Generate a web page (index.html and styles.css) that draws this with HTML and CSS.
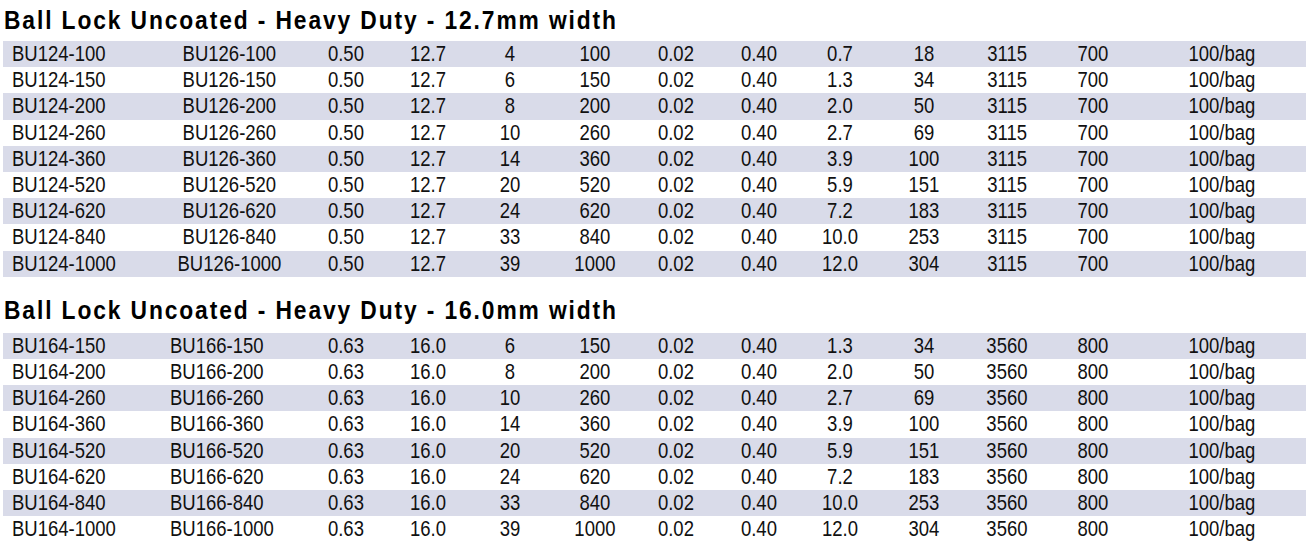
FILE: index.html
```html
<!DOCTYPE html>
<html>
<head>
    <link rel="stylesheet" href="styles.css">
</head>
<body>
    <section class="spec-block">
        <h2 class="spec-title"><span>Ball Lock Uncoated - Heavy Duty - 12.7mm width</span></h2>
        <table class="spec-table spec-table-a">
            <colgroup>
                <col class="c-code"><col class="c-alt"><col class="c-3"><col class="c-4"><col class="c-5"><col class="c-6"><col class="c-7">
                <col class="c-8"><col class="c-9"><col class="c-10"><col class="c-11"><col class="c-12"><col class="c-13">
            </colgroup>
            <tbody>
                <tr><td><span>BU124-100</span></td><td><span>BU126-100</span></td><td><span>0.50</span></td><td><span>12.7</span></td><td><span>4</span></td><td><span>100</span></td><td><span>0.02</span></td><td><span>0.40</span></td><td><span>0.7</span></td><td><span>18</span></td><td><span>3115</span></td><td><span>700</span></td><td><span>100/bag</span></td></tr>
                <tr><td><span>BU124-150</span></td><td><span>BU126-150</span></td><td><span>0.50</span></td><td><span>12.7</span></td><td><span>6</span></td><td><span>150</span></td><td><span>0.02</span></td><td><span>0.40</span></td><td><span>1.3</span></td><td><span>34</span></td><td><span>3115</span></td><td><span>700</span></td><td><span>100/bag</span></td></tr>
                <tr><td><span>BU124-200</span></td><td><span>BU126-200</span></td><td><span>0.50</span></td><td><span>12.7</span></td><td><span>8</span></td><td><span>200</span></td><td><span>0.02</span></td><td><span>0.40</span></td><td><span>2.0</span></td><td><span>50</span></td><td><span>3115</span></td><td><span>700</span></td><td><span>100/bag</span></td></tr>
                <tr><td><span>BU124-260</span></td><td><span>BU126-260</span></td><td><span>0.50</span></td><td><span>12.7</span></td><td><span>10</span></td><td><span>260</span></td><td><span>0.02</span></td><td><span>0.40</span></td><td><span>2.7</span></td><td><span>69</span></td><td><span>3115</span></td><td><span>700</span></td><td><span>100/bag</span></td></tr>
                <tr><td><span>BU124-360</span></td><td><span>BU126-360</span></td><td><span>0.50</span></td><td><span>12.7</span></td><td><span>14</span></td><td><span>360</span></td><td><span>0.02</span></td><td><span>0.40</span></td><td><span>3.9</span></td><td><span>100</span></td><td><span>3115</span></td><td><span>700</span></td><td><span>100/bag</span></td></tr>
                <tr><td><span>BU124-520</span></td><td><span>BU126-520</span></td><td><span>0.50</span></td><td><span>12.7</span></td><td><span>20</span></td><td><span>520</span></td><td><span>0.02</span></td><td><span>0.40</span></td><td><span>5.9</span></td><td><span>151</span></td><td><span>3115</span></td><td><span>700</span></td><td><span>100/bag</span></td></tr>
                <tr><td><span>BU124-620</span></td><td><span>BU126-620</span></td><td><span>0.50</span></td><td><span>12.7</span></td><td><span>24</span></td><td><span>620</span></td><td><span>0.02</span></td><td><span>0.40</span></td><td><span>7.2</span></td><td><span>183</span></td><td><span>3115</span></td><td><span>700</span></td><td><span>100/bag</span></td></tr>
                <tr><td><span>BU124-840</span></td><td><span>BU126-840</span></td><td><span>0.50</span></td><td><span>12.7</span></td><td><span>33</span></td><td><span>840</span></td><td><span>0.02</span></td><td><span>0.40</span></td><td><span>10.0</span></td><td><span>253</span></td><td><span>3115</span></td><td><span>700</span></td><td><span>100/bag</span></td></tr>
                <tr><td><span>BU124-1000</span></td><td><span>BU126-1000</span></td><td><span>0.50</span></td><td><span>12.7</span></td><td><span>39</span></td><td><span>1000</span></td><td><span>0.02</span></td><td><span>0.40</span></td><td><span>12.0</span></td><td><span>304</span></td><td><span>3115</span></td><td><span>700</span></td><td><span>100/bag</span></td></tr>
            </tbody>
        </table>
    </section>

    <section class="spec-block">
        <h2 class="spec-title"><span>Ball Lock Uncoated - Heavy Duty - 16.0mm width</span></h2>
        <table class="spec-table spec-table-b">
            <colgroup>
                <col class="c-code"><col class="c-alt"><col class="c-3"><col class="c-4"><col class="c-5"><col class="c-6"><col class="c-7">
                <col class="c-8"><col class="c-9"><col class="c-10"><col class="c-11"><col class="c-12"><col class="c-13">
            </colgroup>
            <tbody>
                <tr><td><span>BU164-150</span></td><td><span>BU166-150</span></td><td><span>0.63</span></td><td><span>16.0</span></td><td><span>6</span></td><td><span>150</span></td><td><span>0.02</span></td><td><span>0.40</span></td><td><span>1.3</span></td><td><span>34</span></td><td><span>3560</span></td><td><span>800</span></td><td><span>100/bag</span></td></tr>
                <tr><td><span>BU164-200</span></td><td><span>BU166-200</span></td><td><span>0.63</span></td><td><span>16.0</span></td><td><span>8</span></td><td><span>200</span></td><td><span>0.02</span></td><td><span>0.40</span></td><td><span>2.0</span></td><td><span>50</span></td><td><span>3560</span></td><td><span>800</span></td><td><span>100/bag</span></td></tr>
                <tr><td><span>BU164-260</span></td><td><span>BU166-260</span></td><td><span>0.63</span></td><td><span>16.0</span></td><td><span>10</span></td><td><span>260</span></td><td><span>0.02</span></td><td><span>0.40</span></td><td><span>2.7</span></td><td><span>69</span></td><td><span>3560</span></td><td><span>800</span></td><td><span>100/bag</span></td></tr>
                <tr><td><span>BU164-360</span></td><td><span>BU166-360</span></td><td><span>0.63</span></td><td><span>16.0</span></td><td><span>14</span></td><td><span>360</span></td><td><span>0.02</span></td><td><span>0.40</span></td><td><span>3.9</span></td><td><span>100</span></td><td><span>3560</span></td><td><span>800</span></td><td><span>100/bag</span></td></tr>
                <tr><td><span>BU164-520</span></td><td><span>BU166-520</span></td><td><span>0.63</span></td><td><span>16.0</span></td><td><span>20</span></td><td><span>520</span></td><td><span>0.02</span></td><td><span>0.40</span></td><td><span>5.9</span></td><td><span>151</span></td><td><span>3560</span></td><td><span>800</span></td><td><span>100/bag</span></td></tr>
                <tr><td><span>BU164-620</span></td><td><span>BU166-620</span></td><td><span>0.63</span></td><td><span>16.0</span></td><td><span>24</span></td><td><span>620</span></td><td><span>0.02</span></td><td><span>0.40</span></td><td><span>7.2</span></td><td><span>183</span></td><td><span>3560</span></td><td><span>800</span></td><td><span>100/bag</span></td></tr>
                <tr><td><span>BU164-840</span></td><td><span>BU166-840</span></td><td><span>0.63</span></td><td><span>16.0</span></td><td><span>33</span></td><td><span>840</span></td><td><span>0.02</span></td><td><span>0.40</span></td><td><span>10.0</span></td><td><span>253</span></td><td><span>3560</span></td><td><span>800</span></td><td><span>100/bag</span></td></tr>
                <tr><td><span>BU164-1000</span></td><td><span>BU166-1000</span></td><td><span>0.63</span></td><td><span>16.0</span></td><td><span>39</span></td><td><span>1000</span></td><td><span>0.02</span></td><td><span>0.40</span></td><td><span>12.0</span></td><td><span>304</span></td><td><span>3560</span></td><td><span>800</span></td><td><span>100/bag</span></td></tr>
            </tbody>
        </table>
    </section>
</body>
</html>
```

FILE: styles.css
```css
:root {
    --row-shade: #d9dbe9;
    --ink: #111;
    /* no condensed face installed, so the text is squeezed horizontally */
    --squeeze: 0.86;
}

body {
    margin: 0;
    padding-left: 3px;
    background: #fff;
    color: var(--ink);
    font-family: "Liberation Sans", Arial, sans-serif;
}

.spec-block {
    width: 1303px;
}

.spec-block + .spec-block {
    margin-top: 13px;
}

.spec-title {
    margin: 0;
    padding: 5px 0 6px 1px;
    font-size: 26.5px;
    font-weight: 700;
    letter-spacing: 2.2px;
    line-height: 30px;
    color: #000;
    white-space: nowrap;
}

.spec-title span {
    display: inline-block;
    transform: scaleX(var(--squeeze));
    transform-origin: 0 50%;
}

.spec-block + .spec-block .spec-title {
    padding-bottom: 8px;
}

.spec-table {
    width: 100%;
    table-layout: fixed;
    border-collapse: collapse;
    font-size: 21.5px;
}

.spec-table td {
    height: 26.2px;
    padding: 0;
    text-align: center;
    line-height: 26.2px;
    white-space: nowrap;
}

.spec-table td span {
    display: inline-block;
    transform: scaleX(var(--squeeze));
}

.spec-table tr:nth-child(odd) {
    background: var(--row-shade);
}

.spec-table td:first-child {
    text-align: left;
    padding-left: 9px;
}

.spec-table td:first-child span,
.spec-table-b td:nth-child(2) span {
    transform-origin: 0 50%;
}

.spec-table-b td:nth-child(2) {
    text-align: left;
    padding-left: 10px;
}

.c-code { width: 157px; }
.c-alt { width: 138px; }
.c-3 { width: 96px; }
.c-4 { width: 68px; }
.c-5 { width: 96px; }
.c-6 { width: 74px; }
.c-7 { width: 88px; }
.c-8 { width: 78px; }
.c-9 { width: 84px; }
.c-10 { width: 84px; }
.c-11 { width: 82px; }
.c-12 { width: 90px; }
.c-13 { width: 168px; }
```
